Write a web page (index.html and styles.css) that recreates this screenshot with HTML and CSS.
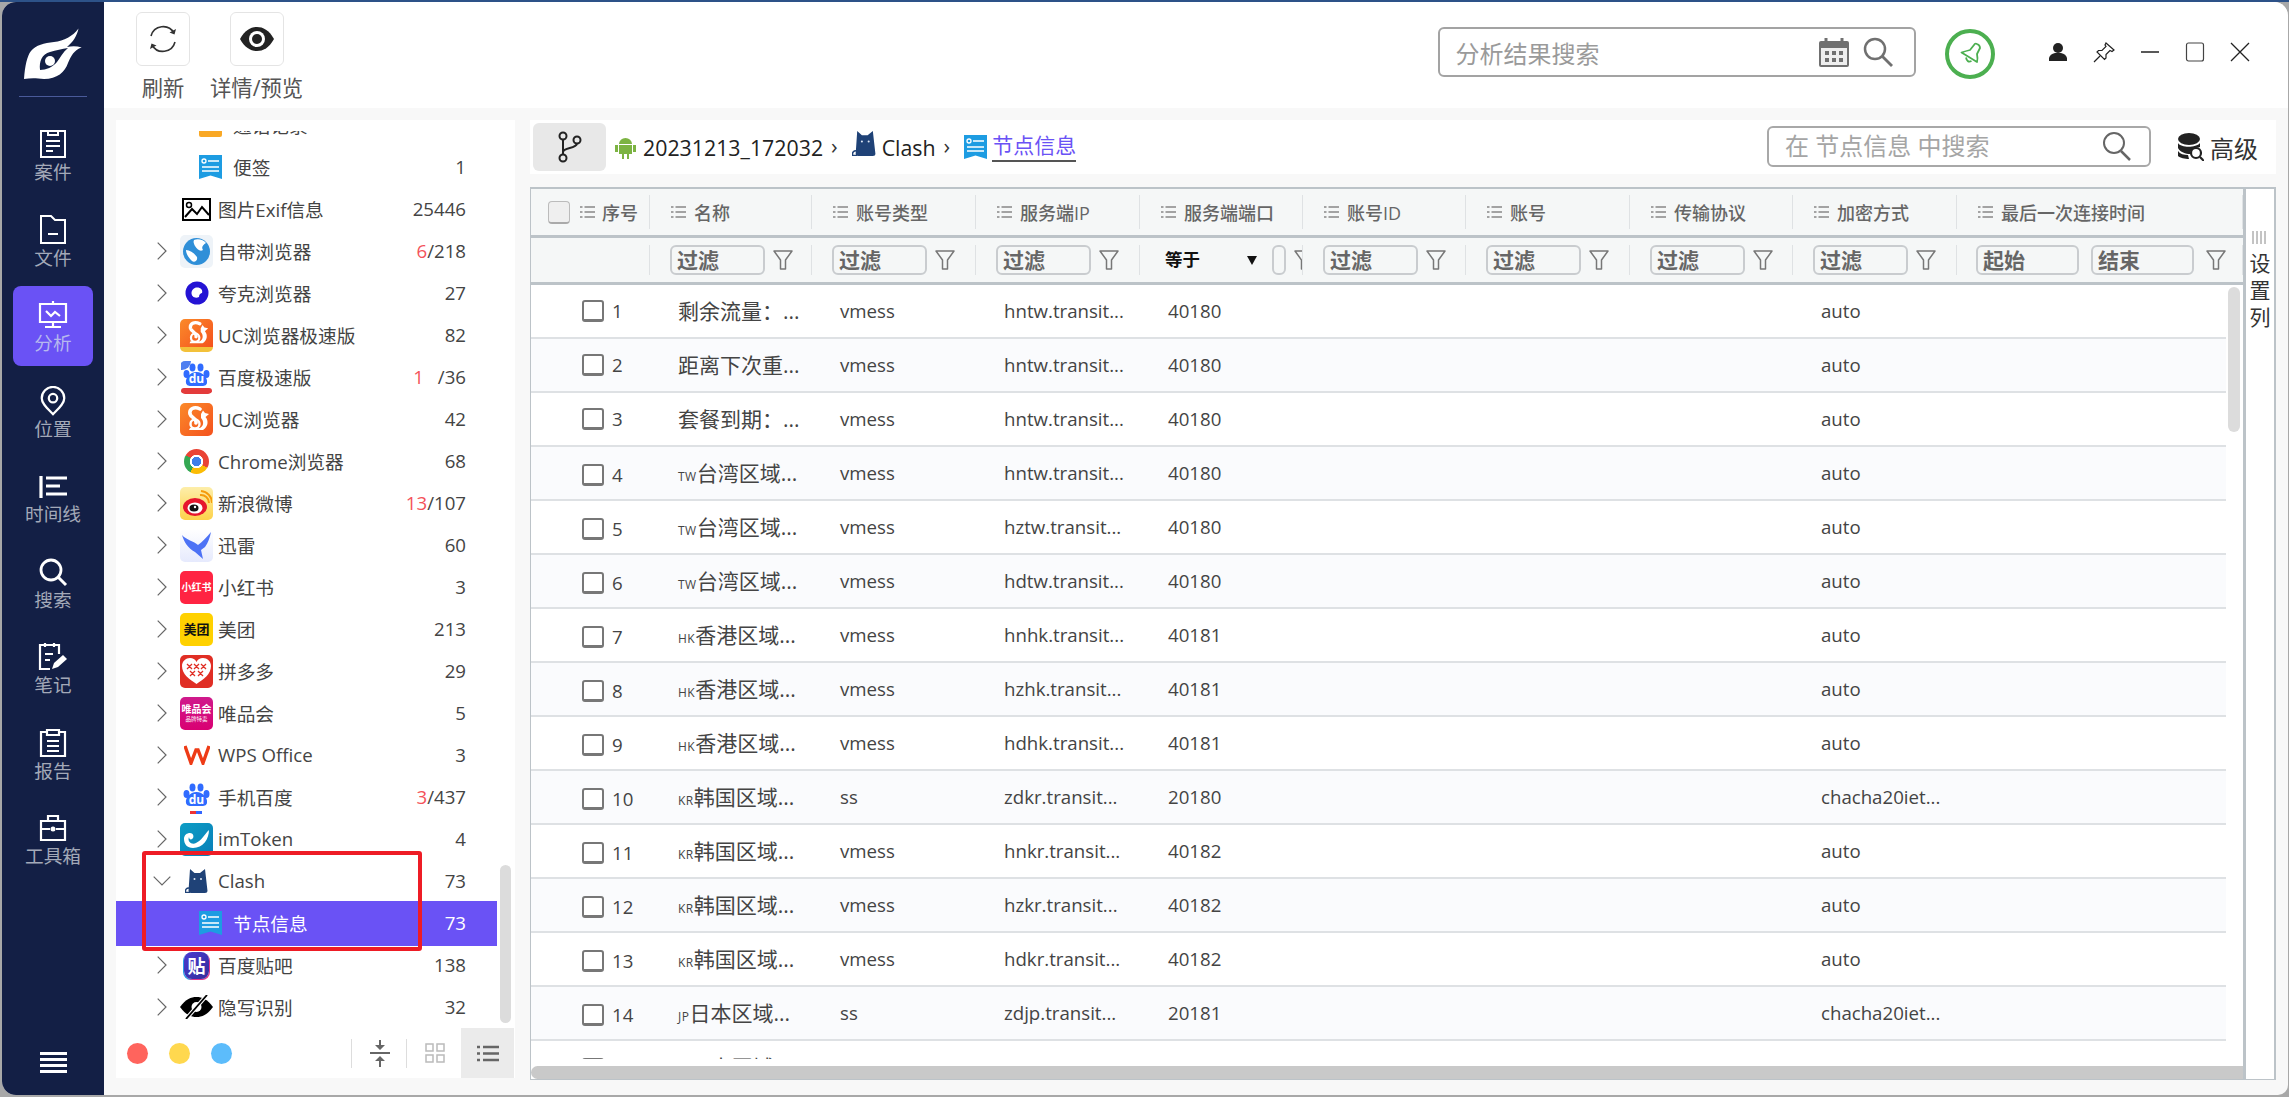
FILE: index.html
```html
<!DOCTYPE html>
<html lang="zh-CN">
<head>
<meta charset="utf-8">
<title>分析</title>
<link rel="stylesheet" href="styles.css">
</head>
<body>
<svg class="defs" width="0" height="0">
  <symbol id="note" viewBox="0 0 23 24"><path d="M0 0H23V24L11.500 20.500 0 24Z" fill="#1d9ce2"/><circle cx="5" cy="6" r="2" fill="none" stroke="#fff" stroke-width="1.300"/><path d="M9 6H20M3 12H20M3 16H20" stroke="#fff" stroke-width="1.500"/></symbol>
  <symbol id="cat" viewBox="0 0 24 24"><path d="M5 0L9.500 4H15L20 0 22.500 22Q22.500 24 20 24H6Q3.500 24 3.500 22Z" fill="#1f4277"/><path d="M4 19Q0 19 .5 23.500H5" fill="none" stroke="#1f4277" stroke-width="1.500"/><circle cx="9.500" cy="10" r="1" fill="#dfe8f5"/><circle cx="16" cy="10" r="1" fill="#dfe8f5"/></symbol>
  <symbol id="chev" viewBox="0 0 10 18"><path d="M.7 .7L9 9 .7 17.300" fill="none" stroke="#666" stroke-width="1.200"/></symbol>
  <symbol id="lines" viewBox="0 0 15 14"><path d="M4.500 2H15M4.500 7H15M4.500 12H15M0 2H2.500M0 7H2.500M0 12H2.500" stroke="#888" stroke-width="1.500" fill="none"/></symbol>
  <symbol id="funnel" viewBox="0 0 20 20"><path d="M1 1H19L12.500 10V19H7.500V10Z" fill="none" stroke="#777" stroke-width="1.500" stroke-linejoin="round"/></symbol>
  <symbol id="paw" viewBox="0 0 33 33"><g fill="#306cff"><ellipse cx="6.500" cy="13" rx="3" ry="4"/><ellipse cx="12.500" cy="6.500" rx="3" ry="4"/><ellipse cx="20.500" cy="6.500" rx="3" ry="4"/><ellipse cx="26.500" cy="13" rx="3" ry="4"/><path d="M16.500 11C23 11 28 17 27 22 26 26 21 25 16.500 25S7 26 6 22C5 17 10 11 16.500 11Z"/></g></symbol>
  <symbol id="squirrel" viewBox="0 0 28 28"><path d="M17 4C11 1 6 4 7 9 8 13 14 13 13 18" fill="none" stroke="#fff" stroke-width="3.600" stroke-linecap="round"/><circle cx="12" cy="19" r="4.500" fill="none" stroke="#fff" stroke-width="2.400"/><path d="M18 9L20 5.500 22 8 26 9 22.500 12C26 16 25 22 20 25H6L7 23H17C21 21 21 16 18 13Z" fill="#fff"/></symbol>
</svg>

<div class="window">
  <nav class="side">
    <svg class="logo" width="58" height="51" viewBox="0 0 58 51"><path d="M0 51C1 38 3 28 7 23 12 17 20 15 30 14 40 13 49 8 54.500 .5 53 8 49 14 43 19 48 18 53 18 57.700 19.500 50 22 47 28 44 35 41 44 33 51 20 51 12 50 6 50 0 51Z" fill="#fff"/><path d="M16 42C15 33 18 26 26 24 32 22 38 21 44 20 39 24 36 30 33 34 29 39 22 42 16 42Z" fill="#131f45"/><circle cx="26" cy="33" r="5" fill="#fff"/></svg>
    <div class="side-line"></div>
    <a class="nav"><svg class="nav-ic" width="28" height="30" viewBox="0 0 28 30"><path d="M2 2H26V28H2ZM9 2V6H19V2M7 12H21M7 17H21M7 22H14" fill="none" stroke="#fff" stroke-width="2"/></svg><span>案件</span></a>
    <a class="nav"><svg class="nav-ic" width="28" height="30" viewBox="0 0 28 30"><path d="M2 1H12L16 5H26V28H2ZM9 19H19" fill="none" stroke="#fff" stroke-width="2"/></svg><span>文件</span></a>
    <a class="nav nav-on"><svg class="nav-ic" width="30" height="30" viewBox="0 0 30 28"><path d="M2 3H28V21H2ZM15 0V3M15 21V25M7 26H23M8 10L13 15 17 11 22 15" fill="none" stroke="#fff" stroke-width="2.200"/></svg><span>分析</span></a>
    <a class="nav"><svg class="nav-ic" width="30" height="32" viewBox="0 0 30 32"><path d="M15 30C9 24 3 19 3 13A12 12 0 0 1 27 13C27 19 21 24 15 30Z" fill="none" stroke="#fff" stroke-width="2.400"/><circle cx="15" cy="13" r="4.500" fill="none" stroke="#fff" stroke-width="2.400"/></svg><span>位置</span></a>
    <a class="nav"><svg class="nav-ic" width="30" height="30" viewBox="0 0 30 30"><path d="M3 5V27M8 7H29M8 15H22M8 23H29" fill="none" stroke="#fff" stroke-width="3.200"/></svg><span>时间线</span></a>
    <a class="nav"><svg class="nav-ic" width="30" height="30" viewBox="0 0 30 30"><circle cx="13" cy="13" r="10" fill="none" stroke="#fff" stroke-width="2.800"/><path d="M20 20L28 28" stroke="#fff" stroke-width="3"/></svg><span>搜索</span></a>
    <a class="nav"><svg class="nav-ic" width="30" height="30" viewBox="0 0 30 30"><path d="M21 12V3H2V27H12M7 1V5M16 1V5M7 12H15M7 18H12" fill="none" stroke="#fff" stroke-width="2.200"/><path d="M14 27L16 21 25 13 29 17 20 25Z" fill="#fff"/></svg><span>笔记</span></a>
    <a class="nav"><svg class="nav-ic" width="28" height="30" viewBox="0 0 28 30"><path d="M8 4H2V28H26V4H20M8 2H20V7H8ZM8 13H20M8 18H20M8 23H20" fill="none" stroke="#fff" stroke-width="2.200"/></svg><span>报告</span></a>
    <a class="nav"><svg class="nav-ic" width="28" height="30" viewBox="0 0 28 30"><path d="M2 8H26V27H2ZM9 8V3H19V8M2 16H11M17 16H26" fill="none" stroke="#fff" stroke-width="2.200"/><circle cx="14" cy="16" r="2.500" fill="#fff"/></svg><span>工具箱</span></a>
    <svg class="burger" width="27" height="21" viewBox="0 0 27 21"><path d="M0 1.500H27M0 7.500H27M0 13.500H27M0 19.500H27" stroke="#fff" stroke-width="3"/></svg>
  </nav>

  <main class="main">
    <header class="toolbar">
      <div class="tool">
        <div class="tool-btn"><svg width="30" height="30" viewBox="0 0 30 30"><path d="M3 12A12.500 12.500 0 0 1 26 9M27 18A12.500 12.500 0 0 1 4 21" fill="none" stroke="#333" stroke-width="1.600"/><path d="M28 5L26.500 10.500 21.500 8.500ZM2 25L3.500 19.500 8.500 21.500Z" fill="#333"/></svg></div>
        <span>刷新</span>
      </div>
      <div class="tool">
        <div class="tool-btn"><svg width="34" height="24" viewBox="0 0 34 24"><path d="M0 12C5 3 11 0 17 0S29 3 34 12C29 21 23 24 17 24S5 21 0 12Z" fill="#222"/><circle cx="17" cy="12" r="8" fill="#fff"/><circle cx="17" cy="12" r="5" fill="#222"/></svg></div>
        <span>详情/预览</span>
      </div>
      <div class="top-right">
        <div class="top-search">
          <span class="ph-big">分析结果搜索</span>
          <svg class="cal" width="30" height="29" viewBox="0 0 30 29"><path d="M0 5Q0 3 2 3H28Q30 3 30 5V27Q30 29 28 29H2Q0 29 0 27Z" fill="#707070"/><path d="M7 0V5M23 0V5" stroke="#707070" stroke-width="3"/><path d="M2 10H28V27H2Z" fill="#eee"/><path d="M6 13H10V17H6ZM13 13H17V17H13ZM20 13H24V17H20ZM6 20H10V24H6ZM13 20H17V24H13ZM20 20H24V24H20Z" fill="#707070"/></svg>
          <svg width="30" height="30" viewBox="0 0 30 30"><circle cx="12" cy="12" r="10" fill="none" stroke="#707070" stroke-width="2.500"/><path d="M19 19L29 29" stroke="#707070" stroke-width="2.800"/></svg>
        </div>
        <svg class="bell" width="50" height="50" viewBox="0 0 50 50"><circle cx="25" cy="25" r="23" fill="none" stroke="#4caf50" stroke-width="4"/><path d="M32 15Q35 16 35 19L32 25Q33 30 32 33 24 28 16.500 23.500 21 22 25 21L29 16Q30 14 32 15ZM21 28.500Q22 34 26.500 32" fill="none" stroke="#4caf50" stroke-width="1.800" stroke-linejoin="round"/></svg>
        <div class="win-btns">
          <svg width="20" height="20" viewBox="0 0 20 20"><circle cx="10" cy="6" r="5" fill="#222"/><path d="M1 19V16Q2 12 7 11H13Q18 12 19 16V19Z" fill="#222"/></svg>
          <svg width="22" height="21" viewBox="0 0 22 21"><path d="M13 1L21 8 19 9.500 17 8.500 13 12.500 13 16 11.500 17.500 4 10 5.500 8.500 9 8.500 13 4.500 12 3ZM7 14L1 20" fill="none" stroke="#222" stroke-width="1.200"/></svg>
          <svg width="20" height="20" viewBox="0 0 20 20"><path d="M1 10H19" stroke="#222" stroke-width="1.500"/></svg>
          <svg width="20" height="20" viewBox="0 0 20 20"><rect x="1.500" y="1" width="17" height="18" rx="2" fill="none" stroke="#444" stroke-width="1.200"/></svg>
          <svg width="20" height="20" viewBox="0 0 20 20"><path d="M1 1L19 19M19 1L1 19" stroke="#222" stroke-width="1.300"/></svg>
        </div>
      </div>
    </header>

    <div class="content">
      <aside class="tree-panel">
        <div class="tree">
          <div class="row-cut"><div class="row child"><i class="ic-note-o"></i><span class="lbl">通话记录</span><span class="cnt"></span></div></div>
          <div class="row child"><svg class="ic-small" width="23" height="24"><use href="#note"/></svg><span class="lbl">便签</span><span class="cnt">1</span></div>
          <div class="row"><span class="sp"></span><span class="app"><svg width="29" height="23" viewBox="0 0 29 23"><rect x="1" y="1" width="27" height="21" fill="#fff" stroke="#000" stroke-width="2"/><circle cx="7" cy="7" r="2.500" fill="none" stroke="#000" stroke-width="1.500"/><path d="M3 19L10 11 15 16 20 9 27 17" fill="none" stroke="#000" stroke-width="2"/></svg></span><span class="lbl">图片Exif信息</span><span class="cnt">25446</span></div>
          <div class="row"><svg class="chev" width="10" height="18"><use href="#chev"/></svg><span class="app tile-light"><svg width="29" height="29" viewBox="0 0 29 29"><circle cx="14.500" cy="14.500" r="13.500" fill="#2f8fd8"/><path d="M12 3C16 1 22 3 24 6 21 8 19 10 21 13 18 15 15 12 13 9 12 7 11 5 12 3ZM4 13C8 13 12 16 15 20 16 24 12 26 10 24 7 21 4 17 4 13Z" fill="#fff"/></svg></span><span class="lbl">自带浏览器</span><span class="cnt"><b>6</b>/218</span></div>
          <div class="row"><svg class="chev" width="10" height="18"><use href="#chev"/></svg><span class="app"><svg width="24" height="24" viewBox="0 0 24 24"><circle cx="12" cy="12" r="11.500" fill="#2413d4"/><path d="M12 6.500C16 6.500 18 9 17 12 16 12 14 13 14 16 10 18 6.500 15.500 6.500 12 6.500 9 9 6.500 12 6.500Z" fill="#fff"/></svg></span><span class="lbl">夸克浏览器</span><span class="cnt">27</span></div>
          <div class="row"><svg class="chev" width="10" height="18"><use href="#chev"/></svg><span class="app tile-uc tile-band"><svg width="26" height="26"><use href="#squirrel"/></svg></span><span class="lbl">UC浏览器极速版</span><span class="cnt">82</span></div>
          <div class="row"><svg class="chev" width="10" height="18"><use href="#chev"/></svg><span class="app"><svg width="33" height="33"><use href="#paw"/></svg><em class="du">du</em><i class="du-band"></i><i class="du-tag"></i></span><span class="lbl">百度极速版</span><span class="cnt"><b>1</b><s class="gap"></s>/36</span></div>
          <div class="row"><svg class="chev" width="10" height="18"><use href="#chev"/></svg><span class="app tile-uc"><svg width="28" height="28"><use href="#squirrel"/></svg></span><span class="lbl">UC浏览器</span><span class="cnt">42</span></div>
          <div class="row"><svg class="chev" width="10" height="18"><use href="#chev"/></svg><span class="app"><i class="chrome"></i></span><span class="lbl">Chrome浏览器</span><span class="cnt">68</span></div>
          <div class="row"><svg class="chev" width="10" height="18"><use href="#chev"/></svg><span class="app tile-weibo"><svg width="30" height="28" viewBox="0 0 30 28"><ellipse cx="13" cy="18" rx="12" ry="9" fill="#e6162d"/><ellipse cx="13" cy="19" rx="7.500" ry="5.500" fill="#fff"/><ellipse cx="12" cy="19" rx="4.500" ry="3.500" fill="#111"/><circle cx="13" cy="18" r="1.200" fill="#fff"/><path d="M18 6A8 8 0 0 1 27 14M19 2A12 12 0 0 1 30 14" fill="none" stroke="#f59b0b" stroke-width="2"/></svg></span><span class="lbl">新浪微博</span><span class="cnt"><b>13</b>/107</span></div>
          <div class="row"><svg class="chev" width="10" height="18"><use href="#chev"/></svg><span class="app tile-bird"><svg width="31" height="29" viewBox="0 0 31 29"><path d="M1 4C5 9 13 10 17 14 21 11 26 6 30 1 29 6 27 12 24 16L20 19 22 28 14 21C7 17 3 11 1 4Z" fill="#4d72f5"/></svg></span><span class="lbl">迅雷</span><span class="cnt">60</span></div>
          <div class="row"><svg class="chev" width="10" height="18"><use href="#chev"/></svg><span class="app tile tile-xhs">小红书</span><span class="lbl">小红书</span><span class="cnt">3</span></div>
          <div class="row"><svg class="chev" width="10" height="18"><use href="#chev"/></svg><span class="app tile tile-mt">美团</span><span class="lbl">美团</span><span class="cnt">213</span></div>
          <div class="row"><svg class="chev" width="10" height="18"><use href="#chev"/></svg><span class="app tile-pdd"><svg width="29" height="26" viewBox="0 0 29 26"><path d="M14.500 26C7 21 0 16 0 8 0 3 4 0 8 0 11 0 13 1 14.500 4 16 1 18 0 21 0 25 0 29 3 29 8 29 16 22 21 14.500 26Z" fill="#fff"/><path d="M5 6L10 11M10 6L5 11M12 6L17 11M17 6L12 11M19 6L24 11M24 6L19 11M8 13L13 18M13 13L8 18M16 13L21 18M21 13L16 18" stroke="#e02e24" stroke-width="1.300"/></svg></span><span class="lbl">拼多多</span><span class="cnt">29</span></div>
          <div class="row"><svg class="chev" width="10" height="18"><use href="#chev"/></svg><span class="app tile tile-vip"><span>唯品会</span><small>品牌特卖</small></span><span class="lbl">唯品会</span><span class="cnt">5</span></div>
          <div class="row"><svg class="chev" width="10" height="18"><use href="#chev"/></svg><span class="app"><svg width="26" height="20" viewBox="0 0 26 20"><path d="M1 1L7 18 12 5 14 5 19 18 25 1" fill="none" stroke="#ee3b16" stroke-width="3.400"/></svg></span><span class="lbl">WPS Office</span><span class="cnt">3</span></div>
          <div class="row"><svg class="chev" width="10" height="18"><use href="#chev"/></svg><span class="app"><svg width="33" height="33"><use href="#paw"/></svg><em class="du du2">du</em><i class="du-bar"></i></span><span class="lbl">手机百度</span><span class="cnt"><b>3</b>/437</span></div>
          <div class="row"><svg class="chev" width="10" height="18"><use href="#chev"/></svg><span class="app tile-im"><svg width="27" height="20" viewBox="0 0 27 20"><path d="M26 1C26 10 20 19 10 19 4 19 1 15 1 10 1 6 4 4 7 4 10 4 11 7 10 9 9 11 6 11 6 8 4 13 9 16 13 14 19 11 21 6 26 1Z" fill="#fff"/></svg></span><span class="lbl">imToken</span><span class="cnt">4</span></div>
          <div class="row"><svg class="chev-d" width="18" height="10" viewBox="0 0 18 10"><path d="M.7 .7L9 9 17.300 .7" fill="none" stroke="#666" stroke-width="1.200"/></svg><span class="app"><svg width="24" height="24"><use href="#cat"/></svg></span><span class="lbl">Clash</span><span class="cnt">73</span></div>
          <div class="row child row-on"><svg class="ic-small" width="23" height="24"><use href="#note"/></svg><span class="lbl">节点信息</span><span class="cnt">73</span></div>
          <div class="row"><svg class="chev" width="10" height="18"><use href="#chev"/></svg><span class="app"><em class="tieba">贴</em></span><span class="lbl">百度贴吧</span><span class="cnt">138</span></div>
          <div class="row"><svg class="chev" width="10" height="18"><use href="#chev"/></svg><span class="app"><svg width="33" height="24" viewBox="0 0 33 24"><path d="M0 12C6 4 11 2 16.500 2S27 4 33 12C27 20 22 22 16.500 22S6 20 0 12Z" fill="#000"/><circle cx="16.500" cy="12" r="5" fill="#fff"/><path d="M6 24L27 0" stroke="#fff" stroke-width="4"/><path d="M6 24L27 0" stroke="#000" stroke-width="1.800"/></svg></span><span class="lbl">隐写识别</span><span class="cnt">32</span></div>
          <div class="tree-scroll"></div>
          <div class="red-box"></div>
        </div>
        <div class="tree-foot">
          <i class="dot dot-r"></i><i class="dot dot-y"></i><i class="dot dot-b"></i>
          <span class="foot-sep foot-sep-1"></span>
          <svg class="foot-ic" width="20" height="28" viewBox="0 0 20 28"><path d="M0 14H20M10 1V8M10 20V28" stroke="#666" stroke-width="2"/><path d="M5 6H15L10 11ZM5 22H15L10 17Z" fill="#666"/></svg>
          <span class="foot-sep foot-sep-2"></span>
          <svg class="foot-ic foot-grid" width="20" height="20" viewBox="0 0 20 20"><path d="M1 1H8V8H1ZM12 1H19V8H12ZM1 12H8V19H1ZM12 12H19V19H12Z" fill="none" stroke="#bbb" stroke-width="1.500"/></svg>
          <span class="foot-on"><svg width="22" height="17" viewBox="0 0 22 17"><path d="M6 2H22M6 8.500H22M6 15H22M0 2H3M0 8.500H3M0 15H3" stroke="#666" stroke-width="2.500"/></svg></span>
        </div>
      </aside>

      <section class="right">
        <div class="crumbs">
          <span class="branch"><svg width="24" height="32" viewBox="0 0 24 32"><circle cx="5" cy="5" r="3.500" fill="none" stroke="#222" stroke-width="2"/><circle cx="5" cy="27" r="3.500" fill="none" stroke="#222" stroke-width="2"/><circle cx="19" cy="9" r="3.500" fill="none" stroke="#222" stroke-width="2"/><path d="M5 8.500V23.500M5 21C6 16 18 18 19 12.500" fill="none" stroke="#222" stroke-width="2"/></svg></span>
          <svg class="c-android" width="21" height="23" viewBox="0 0 21 23"><path d="M4 8A6.500 6 0 0 1 17 8ZM4 9H17V18H14V23H12V18H9V23H7V18H4ZM0 9H3V16H0ZM18 9H21V16H18Z" fill="#7cb342"/></svg>
          <span class="c-txt">20231213_172032</span><span class="c-sep">›</span>
          <svg class="c-cat" width="25" height="25"><use href="#cat"/></svg>
          <span class="c-txt">Clash</span><span class="c-sep">›</span>
          <svg class="c-note" width="23" height="24"><use href="#note"/></svg>
          <span class="c-cur">节点信息</span>
          <div class="c-search">
            <span class="ph-mid">在 节点信息 中搜索</span>
            <svg width="29" height="30" viewBox="0 0 29 30"><circle cx="12" cy="12" r="10" fill="none" stroke="#666" stroke-width="2"/><path d="M19 20L28 29" stroke="#666" stroke-width="2.500"/></svg>
          </div>
          <svg class="c-db" width="26" height="28" viewBox="0 0 26 28"><ellipse cx="11" cy="6" rx="11" ry="6" fill="#222"/><path d="M0 10C3 15 18 15 22 10V14C18 15 12 16 12 21 8 21 2 19 0 15ZM0 18C2 21 6 22 10 22L11 26C7 26 2 25 0 23Z" fill="#222"/><circle cx="18" cy="20" r="5" fill="#fff" stroke="#222" stroke-width="2.200"/><path d="M22 24L26 28" stroke="#222" stroke-width="2.200"/></svg>
          <span class="c-adv">高级</span>
        </div>

        <div class="table">
          <div class="t-body">
            <div class="grid t-head">
              <div class="hc hc-first"><i class="chk-head"></i><svg width="15" height="14"><use href="#lines"/></svg><span>序号</span></div>
              <div class="hc"><svg width="15" height="14"><use href="#lines"/></svg><span>名称</span></div>
              <div class="hc"><svg width="15" height="14"><use href="#lines"/></svg><span>账号类型</span></div>
              <div class="hc"><svg width="15" height="14"><use href="#lines"/></svg><span>服务端IP</span></div>
              <div class="hc"><svg width="15" height="14"><use href="#lines"/></svg><span>服务端端口</span></div>
              <div class="hc"><svg width="15" height="14"><use href="#lines"/></svg><span>账号ID</span></div>
              <div class="hc"><svg width="15" height="14"><use href="#lines"/></svg><span>账号</span></div>
              <div class="hc"><svg width="15" height="14"><use href="#lines"/></svg><span>传输协议</span></div>
              <div class="hc"><svg width="15" height="14"><use href="#lines"/></svg><span>加密方式</span></div>
              <div class="hc"><svg width="15" height="14"><use href="#lines"/></svg><span>最后一次连接时间</span></div>
            </div>
            <div class="grid t-filter">
              <div class="fc"></div>
              <div class="fc"><span class="finp">过滤</span><svg width="20" height="20"><use href="#funnel"/></svg></div>
              <div class="fc"><span class="finp">过滤</span><svg width="20" height="20"><use href="#funnel"/></svg></div>
              <div class="fc"><span class="finp">过滤</span><svg width="20" height="20"><use href="#funnel"/></svg></div>
              <div class="fc fc-eq"><b class="eq">等于</b><i class="tri"></i><span class="finp finp-tiny"></span><svg width="20" height="20"><use href="#funnel"/></svg></div>
              <div class="fc"><span class="finp">过滤</span><svg width="20" height="20"><use href="#funnel"/></svg></div>
              <div class="fc"><span class="finp">过滤</span><svg width="20" height="20"><use href="#funnel"/></svg></div>
              <div class="fc"><span class="finp">过滤</span><svg width="20" height="20"><use href="#funnel"/></svg></div>
              <div class="fc"><span class="finp">过滤</span><svg width="20" height="20"><use href="#funnel"/></svg></div>
              <div class="fc fc-last"><span class="finp finp-date">起始</span><span class="finp finp-date">结束</span><svg width="20" height="20"><use href="#funnel"/></svg></div>
            </div>
            <div class="rows">
              <div class="grid tr"><div class="td td-n"><i class="chk"></i>1</div><div class="td td-name">剩余流量：...</div><div class="td">vmess</div><div class="td">hntw.transit...</div><div class="td">40180</div><div></div><div></div><div></div><div class="td">auto</div><div></div></div>
              <div class="grid tr"><div class="td td-n"><i class="chk"></i>2</div><div class="td td-name">距离下次重...</div><div class="td">vmess</div><div class="td">hntw.transit...</div><div class="td">40180</div><div></div><div></div><div></div><div class="td">auto</div><div></div></div>
              <div class="grid tr"><div class="td td-n"><i class="chk"></i>3</div><div class="td td-name">套餐到期：...</div><div class="td">vmess</div><div class="td">hntw.transit...</div><div class="td">40180</div><div></div><div></div><div></div><div class="td">auto</div><div></div></div>
              <div class="grid tr"><div class="td td-n"><i class="chk"></i>4</div><div class="td td-name"><small>TW</small>台湾区域...</div><div class="td">vmess</div><div class="td">hntw.transit...</div><div class="td">40180</div><div></div><div></div><div></div><div class="td">auto</div><div></div></div>
              <div class="grid tr"><div class="td td-n"><i class="chk"></i>5</div><div class="td td-name"><small>TW</small>台湾区域...</div><div class="td">vmess</div><div class="td">hztw.transit...</div><div class="td">40180</div><div></div><div></div><div></div><div class="td">auto</div><div></div></div>
              <div class="grid tr"><div class="td td-n"><i class="chk"></i>6</div><div class="td td-name"><small>TW</small>台湾区域...</div><div class="td">vmess</div><div class="td">hdtw.transit...</div><div class="td">40180</div><div></div><div></div><div></div><div class="td">auto</div><div></div></div>
              <div class="grid tr"><div class="td td-n"><i class="chk"></i>7</div><div class="td td-name"><small>HK</small>香港区域...</div><div class="td">vmess</div><div class="td">hnhk.transit...</div><div class="td">40181</div><div></div><div></div><div></div><div class="td">auto</div><div></div></div>
              <div class="grid tr"><div class="td td-n"><i class="chk"></i>8</div><div class="td td-name"><small>HK</small>香港区域...</div><div class="td">vmess</div><div class="td">hzhk.transit...</div><div class="td">40181</div><div></div><div></div><div></div><div class="td">auto</div><div></div></div>
              <div class="grid tr"><div class="td td-n"><i class="chk"></i>9</div><div class="td td-name"><small>HK</small>香港区域...</div><div class="td">vmess</div><div class="td">hdhk.transit...</div><div class="td">40181</div><div></div><div></div><div></div><div class="td">auto</div><div></div></div>
              <div class="grid tr"><div class="td td-n"><i class="chk"></i>10</div><div class="td td-name"><small>KR</small>韩国区域...</div><div class="td">ss</div><div class="td">zdkr.transit...</div><div class="td">20180</div><div></div><div></div><div></div><div class="td">chacha20iet...</div><div></div></div>
              <div class="grid tr"><div class="td td-n"><i class="chk"></i>11</div><div class="td td-name"><small>KR</small>韩国区域...</div><div class="td">vmess</div><div class="td">hnkr.transit...</div><div class="td">40182</div><div></div><div></div><div></div><div class="td">auto</div><div></div></div>
              <div class="grid tr"><div class="td td-n"><i class="chk"></i>12</div><div class="td td-name"><small>KR</small>韩国区域...</div><div class="td">vmess</div><div class="td">hzkr.transit...</div><div class="td">40182</div><div></div><div></div><div></div><div class="td">auto</div><div></div></div>
              <div class="grid tr"><div class="td td-n"><i class="chk"></i>13</div><div class="td td-name"><small>KR</small>韩国区域...</div><div class="td">vmess</div><div class="td">hdkr.transit...</div><div class="td">40182</div><div></div><div></div><div></div><div class="td">auto</div><div></div></div>
              <div class="grid tr"><div class="td td-n"><i class="chk"></i>14</div><div class="td td-name"><small>JP</small>日本区域...</div><div class="td">ss</div><div class="td">zdjp.transit...</div><div class="td">20181</div><div></div><div></div><div></div><div class="td">chacha20iet...</div><div></div></div>
              <div class="grid tr"><div class="td td-n"><i class="chk"></i>15</div><div class="td td-name"><small>JP</small>日本区域...</div><div class="td">vmess</div><div class="td">hnjp.transit...</div><div class="td">40183</div><div></div><div></div><div></div><div class="td">auto</div><div></div></div>
              <div class="v-scroll"></div>
            </div>
            <div class="h-scroll"></div>
          </div>
          <div class="set-col">
            <svg width="16" height="13" viewBox="0 0 16 13"><path d="M1 0V13M5 0V13M9 0V13M13 0V13" stroke="#888" stroke-width="1"/></svg>
            <span>设</span><span>置</span><span>列</span>
          </div>
        </div>
      </section>
    </div>
  </main>
</div>
</body>
</html>
```

FILE: styles.css
```css
* { box-sizing: border-box; }
html, body { margin: 0; height: 100%; }
body {
  background: linear-gradient(#2d5288 0 2px, #a8a8a8 2px);
  overflow: hidden;
  font-family: "Open Sans", "Noto Sans CJK SC", sans-serif;
  font-size: 18.67px;
  color: #333;
}
.defs { position: absolute; }
.window {
  display: flex;
  width: 2286px;
  height: 1093px;
  margin: 2px 0 0 2px;
  border-radius: 14px 14px 10px 14px;
  overflow: hidden;
  background: #f8f8f8;
}

/* left navigation */
.side {
  width: 102px;
  flex: none;
  background: #131f45;
  display: flex;
  flex-direction: column;
  align-items: center;
  padding-top: 26px;
}
.logo { flex: none; }
.side-line { width: 68px; height: 1px; background: #4a5a9a; margin: 17px 0 18px; flex: none; }
.nav {
  width: 80px;
  height: 80px;
  margin-bottom: 5.5px;
  flex: none;
  display: flex;
  flex-direction: column;
  align-items: center;
  padding-top: 14px;
  border-radius: 8px;
  color: #a3a9b8;
  font-size: 18.67px;
}
.nav span { line-height: 24px; margin-top: 1px; white-space: nowrap; }
.nav-ic { height: 30px; flex: none; }
.nav-on { background: #6a52f5; }
.nav-on span { color: #b6b8ee; }
.burger { margin-top: auto; margin-bottom: 22px; flex: none; }

/* main */
.main { flex: 1; display: flex; flex-direction: column; min-width: 0; }
.toolbar {
  height: 106px;
  flex: none;
  background: #fff;
  display: flex;
  padding: 10px 38.5px 0 32px;
  gap: 20px;
}
.tool { display: flex; flex-direction: column; align-items: center; font-size: 21.33px; color: #555; }
.tool span { line-height: 30px; margin-top: 7px; white-space: nowrap; }
.tool-btn {
  width: 54px;
  height: 54px;
  border: 1px solid #e4e4e4;
  border-radius: 6px;
  display: flex;
  align-items: center;
  justify-content: center;
}
.top-right { margin-left: auto; display: flex; align-items: center; height: 50px; margin-top: 15px; }
.top-search {
  width: 478px;
  height: 50px;
  border: 2px solid #a3a3a3;
  border-radius: 6px;
  display: flex;
  align-items: center;
  padding: 0 21px 0 16px;
}
.ph-big { font-size: 24px; color: #9a9a9a; margin-right: auto; }
.cal { margin-right: 14px; }
.bell { margin-left: 29px; margin-top: 4px; flex: none; }
.win-btns { display: flex; align-items: center; gap: 25px; margin-left: 53px; }

/* content */
.content { flex: 1; display: flex; padding: 12px 12px 0 12px; gap: 15px; min-height: 0; }
.tree-panel {
  width: 399px;
  height: 958px;
  flex: none;
  background: #fff;
  display: flex;
  flex-direction: column;
  padding-top: 11px;
}
.tree { position: relative; flex: 1; overflow: hidden; min-height: 0; }
.row {
  position: relative;
  height: 42px;
  width: 381px;
  display: flex;
  align-items: center;
  padding-left: 41px;
  white-space: nowrap;
  color: #444;
}
.row-cut { height: 15px; display: flex; align-items: flex-end; overflow: hidden; }
.row-cut .row { flex: none; }
.row.child { padding-left: 83px; }
.ic-note-o { width: 23px; height: 24px; background: #f9a825; border-radius: 2px; flex: none; }
.ic-small { flex: none; }
.row.child .lbl { margin-left: 11px; }
.chev { flex: none; }
.chev-d { flex: none; margin-left: -4px; margin-right: -4px; }
.sp { width: 10px; flex: none; }
.app {
  position: relative;
  width: 33px;
  height: 33px;
  margin-left: 13px;
  flex: none;
  display: flex;
  align-items: center;
  justify-content: center;
  border-radius: 5px;
  overflow: hidden;
}
.lbl { margin-left: 5px; margin-bottom: 2px; }
.cnt { margin-left: auto; width: 80px; text-align: right; margin-right: 31px; margin-bottom: 2px; }
.cnt b { font-weight: 400; color: #f4525a; }
.gap { display: inline-block; width: 14px; text-decoration: none; }
.tile-light { background: #eef3f8; }
.tile-uc { background: linear-gradient(135deg, #fb8a2a, #f4521e); }
.tile-band { border-bottom: 5px solid #f3c13a; }
.tile-weibo { background: linear-gradient(#fdeeaa, #fdd24a); }
.tile-bird { background: linear-gradient(#ffffff, #e6eafd); }
.tile { font-weight: 700; flex-direction: column; line-height: 1; }
.tile-xhs { background: #ff2442; color: #fff; font-size: 10px; }
.tile-mt { background: #ffd100; color: #111; font-size: 13px; }
.tile-pdd { background: #e02e24; }
.tile-vip { background: linear-gradient(#cf1a8c, #d90072); color: #fff; font-size: 10px; gap: 3px; }
.tile-vip small { font-size: 5.500px; font-weight: 400; }
.tile-im { background: linear-gradient(135deg, #0c9dc5, #0a7fb8); }
.chrome {
  width: 25px;
  height: 25px;
  border-radius: 50%;
  background:
    radial-gradient(circle, #3f7fe8 0 4.5px, #fff 5px 6.5px, transparent 7px),
    conic-gradient(#e94335 0 120deg, #fbbc05 120deg 210deg, #34a853 210deg 300deg, #e94335 300deg);
}
.du { position: absolute; left: 0; right: 0; top: 12px; text-align: center; font: 700 12px/1 "Open Sans", sans-serif; color: #fff; }
.du2 { top: 13px; }
.du-band { position: absolute; left: 1px; top: 0; width: 10px; height: 9px; background: #4f7ff0; border-radius: 0 0 9px 0; }
.du-tag { position: absolute; left: 1px; right: 1px; bottom: 0; height: 6px; background: #e33b3b; border-radius: 3px; }
.du-bar { position: absolute; left: 10px; width: 12px; bottom: 0; height: 3px; background: linear-gradient(90deg, #e33 50%, #36f 50%); }
.tieba {
  width: 25px;
  height: 27px;
  border-radius: 8px;
  background: linear-gradient(135deg, #4a3ccf, #342d9c);
  color: #fff;
  font: 700 18px/27px "Noto Sans CJK SC", sans-serif;
  text-align: center;
  box-shadow: 1px 1px 0 #e0368c, -1px 1px 0 #28a0e8;
}
.row-on {
  background: #6a52f5;
  color: #fff;
  height: 45px;
  margin: -1.5px 0;
  z-index: 1;
}
.row-on .lbl, .row-on .cnt { color: #fff; }
.tree-scroll { position: absolute; right: 4px; top: 734px; width: 11px; height: 158px; background: #dcdcdc; border-radius: 6px; }
.red-box { position: absolute; left: 26px; top: 720px; width: 280px; height: 100px; border: 4.500px solid #ee1c25; border-radius: 3px; z-index: 2; }
.tree-foot { height: 50px; flex: none; display: flex; align-items: center; }
.dot { width: 21px; height: 21px; border-radius: 50%; margin: 0 10.5px; flex: none; }
.dot-r { background: #ff645d; }
.dot-y { background: #ffd84f; }
.dot-b { background: #5cbcfb; }
.foot-sep { width: 1px; height: 29px; background: #ddd; flex: none; }
.foot-sep-1 { margin-left: 109px; }
.foot-ic { flex: none; margin: 0 16px 0 18px; }
.foot-on { margin-left: auto; width: 53px; height: 50px; background: #ebebeb; display: flex; align-items: center; justify-content: center; margin-right: 1px; }

/* right */
.right { flex: 1; min-width: 0; height: 960px; display: flex; flex-direction: column; }
.crumbs {
  height: 54px;
  flex: none;
  background: #fff;
  display: flex;
  align-items: center;
  padding: 0 18px 0 3px;
  font-size: 21.33px;
  white-space: nowrap;
  color: #222;
}
.branch { width: 73px; height: 48px; background: #e8e8e8; border-radius: 6px; display: flex; align-items: center; justify-content: center; flex: none; }
.c-android { margin-left: 9px; margin-right: 7px; flex: none; }
.c-sep { margin: 0 14px 4px 8px; font-size: 22px; color: #333; }
.c-cat { margin-right: 5px; margin-top: -8px; flex: none; }
.c-note { margin-right: 5px; flex: none; }
.c-cur { color: #6a52f5; font-size: 21px; border-bottom: 2px solid #555; line-height: 29px; margin-top: -1px; }
.c-search {
  margin-left: auto;
  width: 384px;
  height: 41px;
  border: 2px solid #a8a8a8;
  border-radius: 6px;
  display: flex;
  align-items: center;
  justify-content: space-between;
  padding: 0 18px 0 16px;
  margin-top: -2px;
}
.ph-mid { font-size: 24px; color: #a5a5a5; line-height: 1; }
.c-db { margin-left: 27px; flex: none; }
.c-adv { margin-left: 6px; font-size: 24px; color: #333; }

.table {
  margin-top: 13px;
  height: 893px;
  flex: none;
  display: flex;
  background: #fff;
  border: 2px solid #bcc3c8;
  border-width: 2px 2px 1px 1px;
}
.t-body { flex: 1; min-width: 0; display: flex; flex-direction: column; }
.grid {
  display: grid;
  grid-template-columns: 119px 162px 164px 164px 163px 163px 164px 163px 164px 1fr;
}
.t-head { height: 49px; flex: none; background: #f5f7f7; align-items: center; border-bottom: 3px solid #bcc3c8; }
.hc {
  height: 34px;
  display: flex;
  align-items: center;
  gap: 8px;
  padding-left: 21px;
  border-right: 1px solid #dfe2e4;
  font-size: 18px;
  color: #666;
  font-weight: 500;
  white-space: nowrap;
  overflow: hidden;
}
.hc svg { flex: none; }
.hc-first { padding-left: 17px; gap: 7px; }
.chk-head { width: 22px; height: 23px; margin-right: 3px; background: #efefef; border: 1px solid #bbb; border-bottom: 2px solid #aaa; border-radius: 4px; flex: none; }
.t-filter { height: 47px; flex: none; background: #f5f7f7; align-items: center; border-bottom: 3px solid #bcc3c8; }
.fc {
  height: 30px;
  display: flex;
  align-items: center;
  gap: 8px;
  padding-left: 20px;
  border-right: 1px solid #dfe2e4;
  overflow: hidden;
}
.fc svg { flex: none; }
.finp {
  width: 95px;
  height: 30px;
  flex: none;
  border: 2px solid #c9cccf;
  border-radius: 6px;
  padding-left: 5px;
  font-size: 21px;
  font-weight: 700;
  line-height: 26px;
  color: #666;
  overflow: hidden;
}
.fc-eq { padding-left: 25px; }
.eq { font-size: 17.500px; color: #111; line-height: 1; flex: none; width: 44px; }
.tri { width: 0; height: 0; border: 5px solid transparent; border-top: 9px solid #111; border-bottom: 0; margin-left: 30px; flex: none; }
.finp-tiny { width: 14px; margin-left: 7px; padding: 0; }
.fc-last { padding-left: 19px; gap: 12px; }
.finp-date { width: 103px; }
.rows { position: relative; flex: 1; min-height: 0; margin-bottom: 7px; overflow: hidden; }
.tr { height: 54px; width: 1695px; border-bottom: 2px solid #dee1e4; }
.tr:nth-child(even) { background: #fafbfd; }
.td { display: block; line-height: 52px; padding-left: 28px; white-space: nowrap; color: #444; font-size: 18.67px; }
.td-name { font-size: 21px; }
.td small { font-size: 12px; letter-spacing: .5px; }
.td-n { display: flex; align-items: center; padding-left: 51px; }
.chk { width: 22px; height: 22px; border: 2px solid #777; border-bottom-width: 3px; border-radius: 3px; background: #fff; margin-right: 8px; flex: none; }
.v-scroll { position: absolute; top: 2px; left: 1697px; width: 12px; height: 145px; background: #dcdcdc; border-radius: 6px; }
.h-scroll { height: 13px; flex: none; background: #c9c9c9; border-radius: 7px 0 0 7px; }
.set-col {
  width: 31px;
  flex: none;
  display: flex;
  flex-direction: column;
  align-items: center;
  padding-top: 42px;
  border-left: 3px solid #bcc3c8;
  font-size: 21px;
  line-height: 27px;
  color: #333;
  background: #fff;
}
.set-col svg { margin-bottom: 6px; flex: none; }
```
